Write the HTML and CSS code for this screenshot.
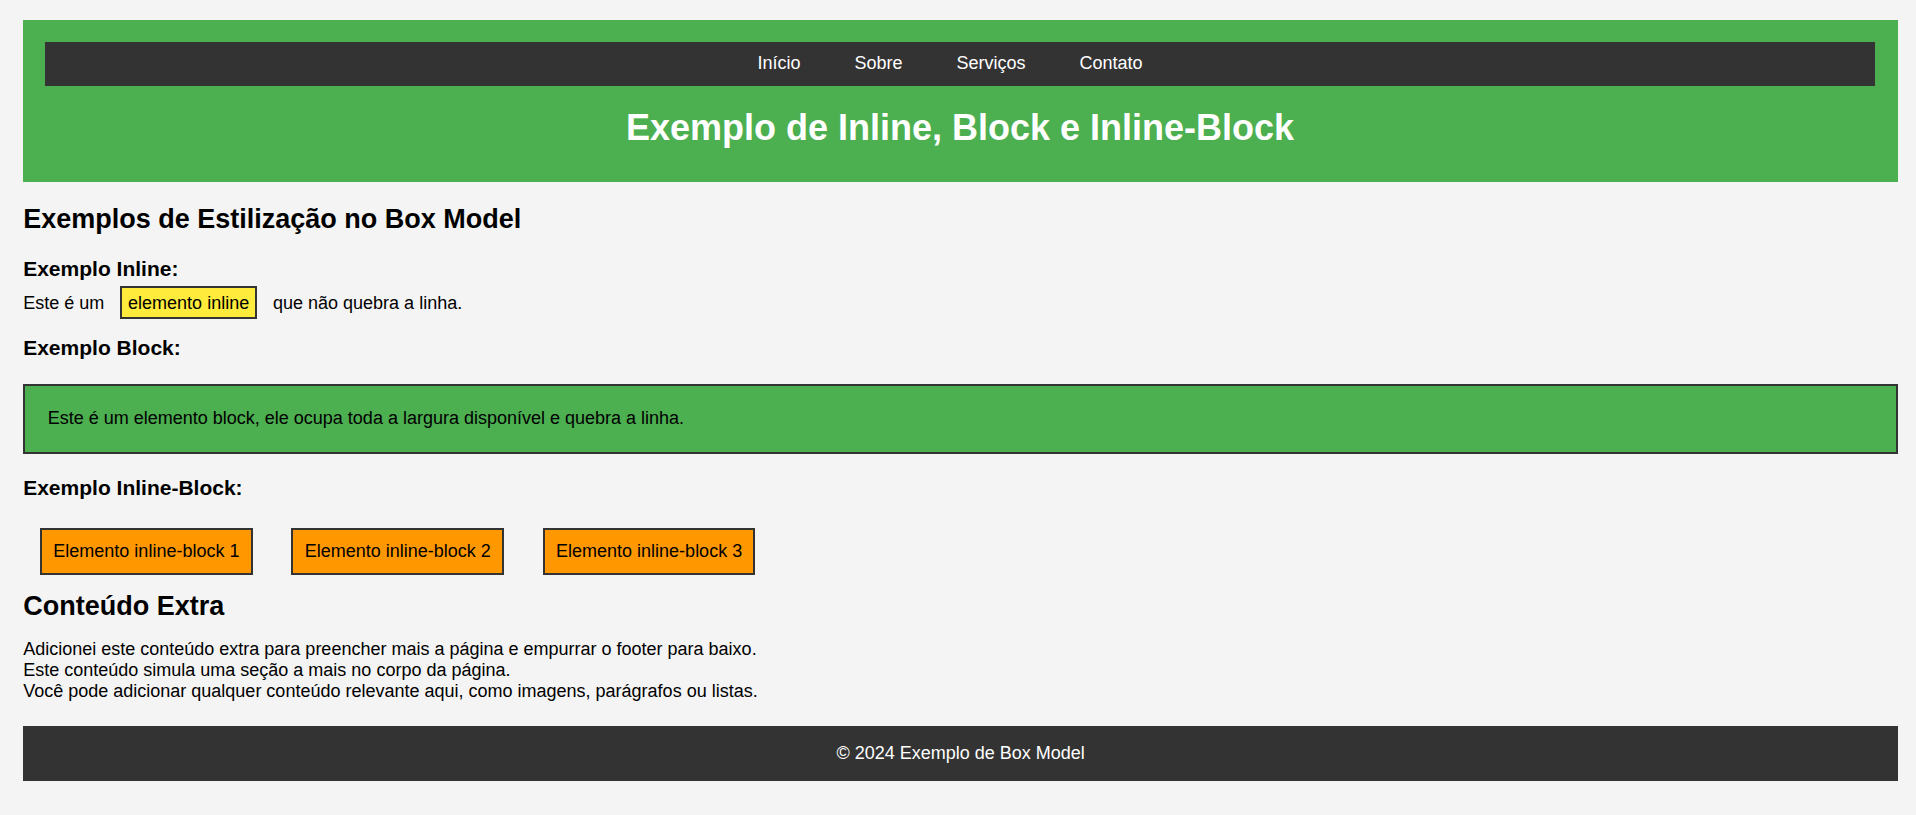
FILE: index.html
```html
<!DOCTYPE html>
<html lang="pt-BR">
<head>
<meta charset="utf-8">
<title>Exemplo de Inline, Block e Inline-Block</title>
<link rel="stylesheet" href="styles.css">
</head>
<body>
<header class="site-header">
  <nav class="main-nav">
    <a href="#">Início</a>
    <a href="#">Sobre</a>
    <a href="#">Serviços</a>
    <a href="#">Contato</a>
  </nav>
  <h1 class="page-title">Exemplo de Inline, Block e Inline-Block</h1>
</header>
<main class="content">
  <h2 class="section-title">Exemplos de Estilização no Box Model</h2>

  <h3 class="example-title">Exemplo Inline:</h3>
  <p class="inline-line">Este é um <span class="inline-el">elemento inline</span> que não quebra a linha.</p>

  <h3 class="example-title">Exemplo Block:</h3>
  <div class="block-el">Este é um elemento block, ele ocupa toda a largura disponível e quebra a linha.</div>

  <h3 class="example-title ib-title">Exemplo Inline-Block:</h3>
  <div class="ib-row">
    <div class="ib-el">Elemento inline-block 1</div>
    <div class="ib-el">Elemento inline-block 2</div>
    <div class="ib-el">Elemento inline-block 3</div>
  </div>

  <h2 class="extra-title">Conteúdo Extra</h2>
  <p class="extra-text">Adicionei este conteúdo extra para preencher mais a página e empurrar o footer para baixo.<br>Este conteúdo simula uma seção a mais no corpo da página.<br>Você pode adicionar qualquer conteúdo relevante aqui, como imagens, parágrafos ou listas.</p>
</main>
<footer class="site-footer">© 2024 Exemplo de Box Model</footer>
</body>
</html>
```
FILE: styles.css
```css
html, body {
  margin: 0;
}
body {
  background: #f4f4f4;
  color: #000;
  font-family: "Liberation Sans", Arial, sans-serif;
  font-size: 18px;
  padding: 20px 18px 20px 23.2px;
}
.site-header {
  background: #4caf50;
  padding: 21.8px 23px 32.5px 21.8px;
  color: #fff;
}
.main-nav {
  background: #333;
  display: flex;
  justify-content: center;
  gap: 54px;
  padding: 11.65px 20px 11.65px 0;
}
.main-nav a {
  color: #fff;
  text-decoration: none;
  font-size: 18px;
}
.page-title {
  margin: 21px 0 0;
  text-align: center;
  font-size: 36px;
  font-weight: bold;
}
.content {
  display: block;
}
.section-title {
  font-size: 27px;
  margin: 22px 0 0;
}
.example-title {
  font-size: 21px;
  margin: 22.4px 0 12px;
}
.inline-line {
  margin: 0;
}
.inline-el {
  background: #ffeb3b;
  border: 2.25px solid #333;
  padding: 5px 5.6px 4.5px;
  margin: 0 11.25px;
}
.block-el {
  background: #4caf50;
  border: 2.25px solid #333;
  padding: 22.5px;
  margin-top: 23.4px;
}
.ib-title {
  margin-top: 22px;
  margin-bottom: 11.1px;
}
.ib-row {
  display: flex;
  gap: 38.75px;
  padding: 16.9px 0 16.1px 16.9px;
}
.ib-el {
  background: #ff9800;
  border: 2.25px solid #333;
  padding: 11.25px;
}
.extra-title {
  font-size: 27px;
  margin: 0;
}
.extra-text {
  margin: 16.6px 0 0;
}
.site-footer {
  margin-top: 24px;
  background: #333;
  color: #fff;
  text-align: center;
  padding: 17px 0;
}
```
